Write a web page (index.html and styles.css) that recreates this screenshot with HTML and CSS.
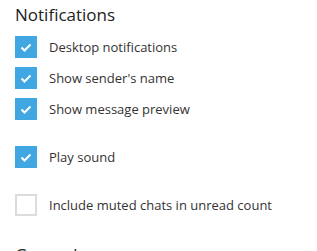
FILE: index.html
```html
<!DOCTYPE html>
<html lang="en">
<head>
  <meta charset="UTF-8">
  <title>Settings - Notifications</title>
  <link rel="stylesheet" href="styles.css">
</head>
<body>
  <!-- Notifications -->
  <div class="section">
    <div class="section-title">Notifications</div>
    <div class="group">
      <label class="option"><span class="box checked"><svg viewBox="0 0 22 22"><path d="M6.5 11.5l3 3 6-6"/></svg></span>Desktop notifications</label>
      <label class="option"><span class="box checked"><svg viewBox="0 0 22 22"><path d="M6.5 11.5l3 3 6-6"/></svg></span>Show sender's name</label>
      <label class="option"><span class="box checked"><svg viewBox="0 0 22 22"><path d="M6.5 11.5l3 3 6-6"/></svg></span>Show message preview</label>
    </div>
    <div class="group">
      <label class="option"><span class="box checked"><svg viewBox="0 0 22 22"><path d="M6.5 11.5l3 3 6-6"/></svg></span>Play sound</label>
    </div>
    <div class="group last">
      <label class="option"><span class="box"></span>Include muted chats in unread count</label>
    </div>
  </div>

  <!-- General -->
  <div class="section next">
    <div class="section-title">General <svg class="badge" viewBox="0 0 12 12"><circle cx="6" cy="6" r="5"/></svg></div>
  </div>
</body>
</html>
```

FILE: styles.css
```css
/* Grundlayout */
body {
  margin: 0;
  padding: 0;
  background: #fff;
  font-family: 'Open Sans', sans-serif;
  color: #333;
  overflow: hidden;
}
.section {
  padding: 4px 15px 0 15px;
}
.section.next {
  padding-top: 0;
}
.section-title {
  font-size: 17px;
  line-height: 22px;
  color: #222;
  margin-bottom: 10px;
  display: flex;
  justify-content: space-between;
  align-items: flex-start;
}
.badge {
  width: 12px;
  height: 12px;
  margin: 6px 22px 0 0;
  fill: #40a7e3;
}
.group {
  display: flex;
  flex-direction: column;
  gap: 9px;
  margin-bottom: 26px;
}
.group.last {
  margin-bottom: 28px;
}
.option {
  display: flex;
  align-items: center;
  gap: 12px;
  height: 22px;
  font-size: 13px;
  cursor: pointer;
}
.box {
  width: 22px;
  height: 22px;
  box-sizing: border-box;
  border: 2px solid #dcdcdc;
  flex-shrink: 0;
}
.box.checked {
  background: #40a7e3;
  border-color: #40a7e3;
}
.box svg {
  display: block;
  width: 22px;
  height: 22px;
  margin: -2px;
  fill: none;
  stroke: #fff;
  stroke-width: 2;
}
```
